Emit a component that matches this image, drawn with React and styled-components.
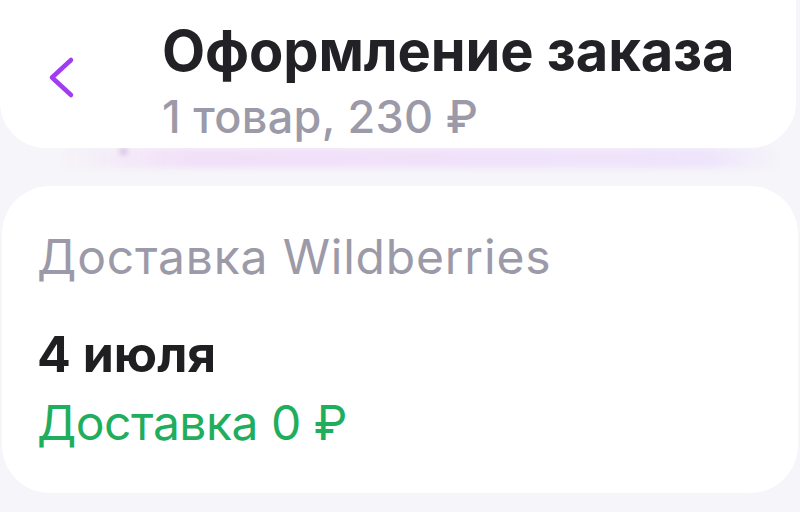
import React from "react";
import styled, { createGlobalStyle } from "styled-components";

const Global = createGlobalStyle`
  html, body {
    margin: 0;
    padding: 0;
    background: #f6f5f9;
    font-family: Inter, "Noto Sans", sans-serif;
    -webkit-font-smoothing: antialiased;
  }
`;

const Page = styled.div`
  width: 800px;
  height: 512px;
  overflow: hidden;
  display: flex;
  flex-direction: column;
`;

const Header = styled.header`
  position: relative;
  z-index: 1;
  width: 796px;
  height: 148px;
  box-sizing: border-box;
  background: #fff;
  border-radius: 0 0 46px 46px;
  display: flex;
  align-items: flex-start;
  padding: 17px 0 0 46px;
`;

const Back = styled.button`
  border: 0;
  background: none;
  padding: 0;
  margin-top: 38px;
  width: 30px;
  height: 44px;
  display: flex;
  align-items: center;
  justify-content: center;
  cursor: pointer;
`;

const Titles = styled.div`
  margin-left: 86px;
  display: flex;
  flex-direction: column;
`;

const Title = styled.h1`
  margin: 0;
  font-size: 56px;
  line-height: 68px;
  font-weight: 700;
  color: #222226;
  letter-spacing: -0.1px;
`;

const Sub = styled.div`
  margin-top: 4px;
  font-size: 45px;
  line-height: 56px;
  font-weight: 500;
  color: #9c9aa8;
  letter-spacing: 0.3px;
`;

const Glow = styled.div`
  position: relative;
  height: 20px;
  margin: 0 20px 0 60px;
  background: linear-gradient(90deg, rgba(240,226,248,0) 0%, #f2dff8 18%, #f0e2fa 60%, #eee4fb 90%, rgba(238,230,250,0) 100%);
  filter: blur(3px);
`;

const Dot = styled.span`
  position: absolute;
  left: 62px;
  top: 1px;
  width: 3px;
  height: 4px;
  background: #6a3a9a;
`;

const Card = styled.section`
  margin: 18px 2px 0 2px;
  height: 307px;
  box-sizing: border-box;
  background: #fff;
  border-radius: 48px;
  padding: 43px 0 0 35px;
  display: flex;
  flex-direction: column;
`;

const Label = styled.div`
  font-size: 48px;
  line-height: 56px;
  font-weight: 400;
  color: ${(p) => p.color || "#9c9aa8"};
  letter-spacing: ${(p) => p.spacing || 0}px;
  margin-bottom: ${(p) => p.gap || 0}px;
`;

const Date = styled.div`
  font-size: 50px;
  line-height: 56px;
  font-weight: 700;
  color: #1f1f22;
  margin-bottom: 13px;
`;

export default function App() {
  return (
    <Page>
      <Global />
      <Header>
        <Back aria-label="Назад">
          <svg width="30" height="44" viewBox="0 0 30 44" fill="none">
            <path d="M25 5 L6 22.5 L25 40" stroke="#a13cf2" strokeWidth="4.5" strokeLinecap="round" strokeLinejoin="round" />
          </svg>
        </Back>
        <Titles>
          <Title>Оформление заказа</Title>
          <Sub>1 товар, 230 ₽</Sub>
        </Titles>
      </Header>
      <Glow>
        <Dot />
      </Glow>
      <Card>
        <Label gap={41} spacing={0.8}>Доставка Wildberries</Label>
        <Date>4 июля</Date>
        <Label color="#1fad5e" spacing={-0.5}>Доставка 0 ₽</Label>
      </Card>
    </Page>
  );
}
